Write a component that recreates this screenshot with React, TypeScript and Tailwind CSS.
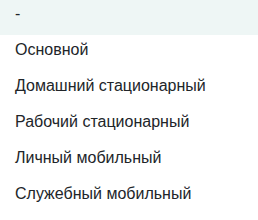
export default function App() {
  const items = ["-", "Основной", "Домашний стационарный", "Рабочий стационарный", "Личный мобильный", "Служебный мобильный"];
  return (
    <div className="w-[258px] h-[220px] bg-white overflow-hidden flex flex-col gap-[1px]" style={{ fontFamily: '"Liberation Sans", Arial, sans-serif' }}>
      {items.map((t, i) => (
        <div
          key={i}
          className={`h-[35px] shrink-0 pl-[15px] pt-[2px] text-[16px] leading-[24px] text-[#212529] ${i === 0 ? "bg-[#eef6f5]" : ""}`}
        >
          {t}
        </div>
      ))}
    </div>
  );
}
